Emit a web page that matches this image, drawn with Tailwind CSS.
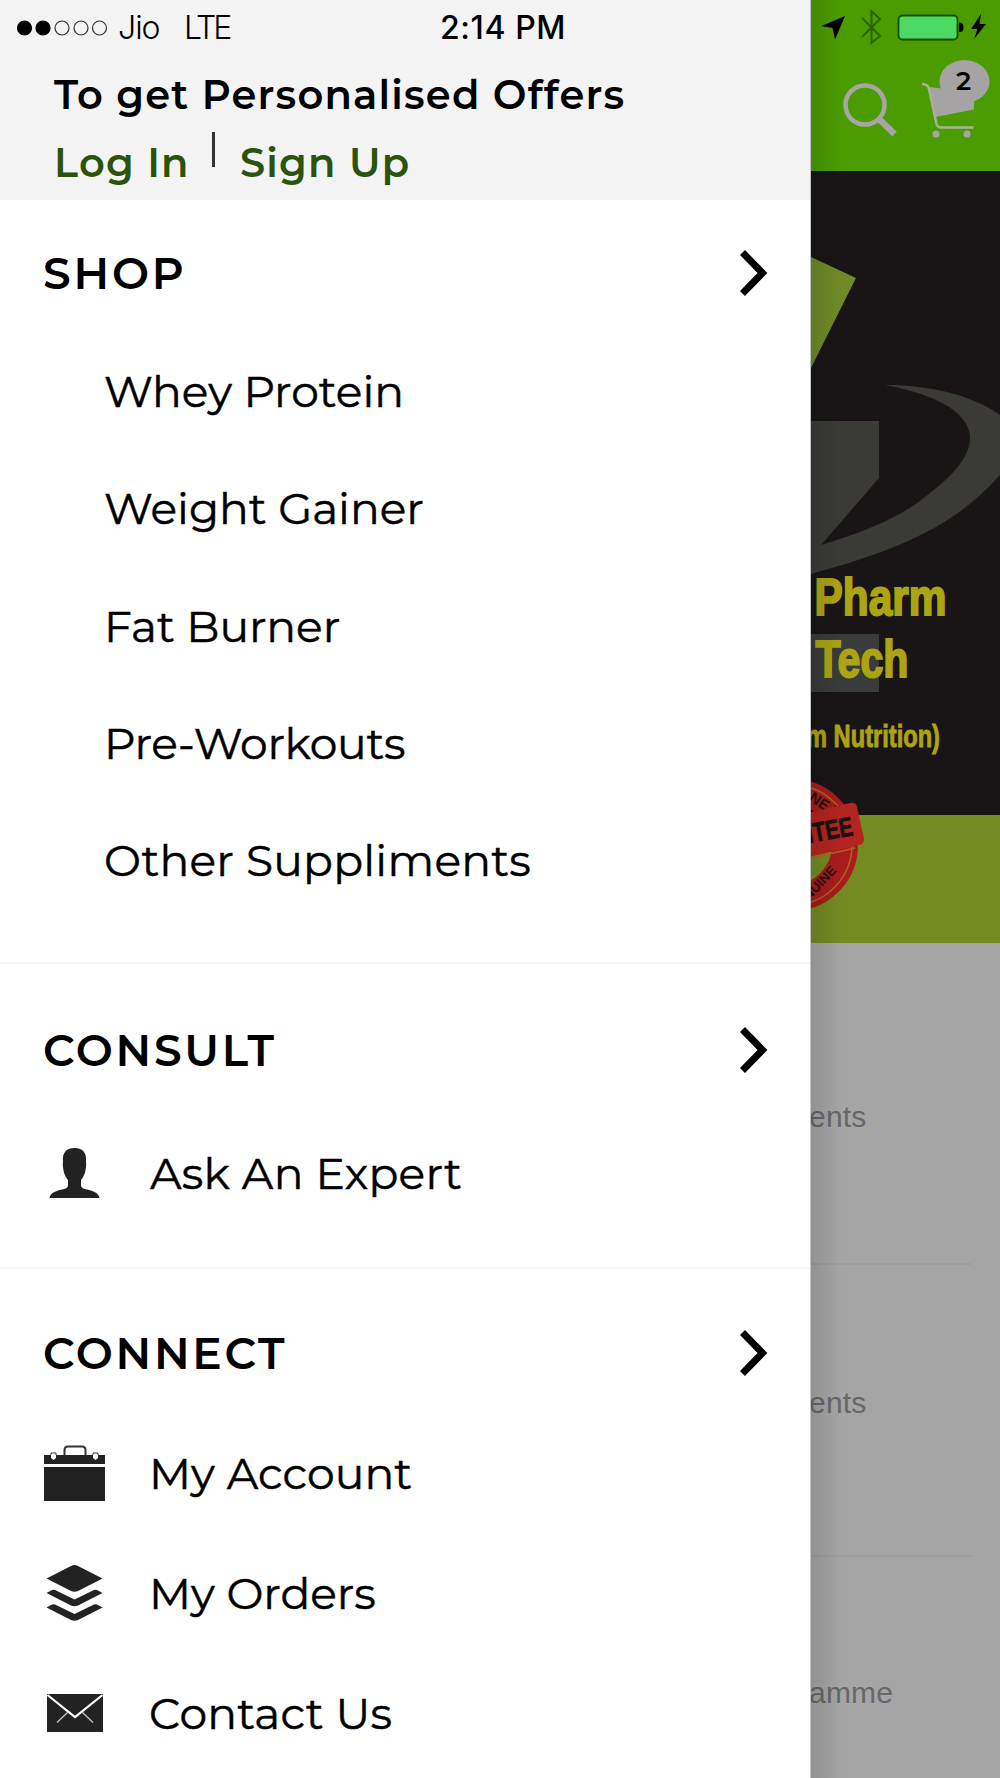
<!DOCTYPE html>
<html lang="en">

<head>
    <meta charset="UTF-8" />
    <title>Menu</title>
    <script src="https://cdn.jsdelivr.net/npm/@tailwindcss/browser@4"></script>
</head>

<body class="w-[1000px] h-[1778px] overflow-hidden flex bg-[#a5a5a5] font-[Montserrat,Inter,sans-serif] text-black">
    <!-- Drawer -->
    <aside class="w-[811px] h-full shrink-0 bg-white border-r border-[#c4c4c4] flex flex-col">
        <header class="h-[200px] shrink-0 bg-[#f3f3f3]">
            <div class="h-[55px] pt-px pl-4 flex items-center font-[Inter,sans-serif] text-[32px] leading-none">
                <svg class="w-[92px] h-4" viewBox="0 0 92 16" fill="none" stroke="#333" stroke-width="1.2">
                    <circle cx="8.5" cy="8" r="7" fill="#000" stroke="#000" />
                    <circle cx="27" cy="8" r="7" fill="#000" stroke="#000" />
                    <circle cx="46" cy="8" r="7" />
                    <circle cx="65" cy="8" r="7" />
                    <circle cx="83.5" cy="8" r="7" />
                </svg>
                <span class="w-[66px] pl-2.5 font-light tracking-[-1px]">Jio</span>
                <span class="w-[266px] pl-2.5 font-light tracking-[-3px]">LTE</span>
                <span class="font-medium tracking-[0.6px]">2:14 PM</span>
            </div>
            <p class="pl-[54px] h-20 leading-[80px] font-semibold text-[40px] tracking-[1.2px] whitespace-nowrap">To get Personalised Offers</p>
            <div class="pl-[54px] flex items-center h-[56px] text-[40px] leading-[56px] font-semibold tracking-[1.2px] text-[#2b530c]">
                <a class="w-[158px]">Log In</a>
                <span class="w-[3px] h-[35px] -mt-[28px] mr-[25px] bg-[#333]"></span>
                <a>Sign Up</a>
            </div>
        </header>

        <section class="h-[764px] shrink-0 pt-[13px] border-b-2 border-[#f5f5f5]">
            <div class="h-[120px] pl-[43px] pr-[42px] flex items-center justify-between">
                <h2 class="text-[44px] font-semibold tracking-[2.8px]">SHOP</h2>
                <svg class="w-7 h-[46px]" viewBox="0 0 28 46" fill="none" stroke="#000" stroke-width="7"><path d="M2.5 2.5 22.500 23 2.5 43.500" /></svg>
            </div>
            <ul class="pl-[104px] text-[44px] leading-[117.3px] [-webkit-text-stroke:0.5px_#000]">
                <li>Whey Protein</li>
                <li>Weight Gainer</li>
                <li>Fat Burner</li>
                <li class="tracking-[-0.2px]">Pre-Workouts</li>
                <li class="tracking-[0.25px]">Other Suppliments</li>
            </ul>
        </section>

        <section class="h-[305px] shrink-0 pt-[26px] border-b-2 border-[#f7f7f7]">
            <div class="h-[120px] pl-[43px] pr-[42px] flex items-center justify-between">
                <h2 class="text-[44px] font-semibold tracking-[2.7px]">CONSULT</h2>
                <svg class="w-7 h-[46px]" viewBox="0 0 28 46" fill="none" stroke="#000" stroke-width="7"><path d="M2.5 2.5 22.500 23 2.5 43.500" /></svg>
            </div>
            <div class="h-[126px] pl-[43px] flex items-center gap-[45px] text-[44px] tracking-[0.3px] [-webkit-text-stroke:0.5px_#000]">
                <svg class="w-[62px] h-[52px]" viewBox="0 0 62 52" fill="#222">
                    <path d="M6.500 51C7 45 16 43 21 42Q25 41 25 38V33C21 28 20.500 24 20 20Q19.500 17 20 15C19 5 24 1 31.500 1S44 5 43 15Q43.500 17 43 20C42.500 24 42 28 38 33V38Q38 41 42 42C47 43 56 45 56.500 51Z" />
                </svg>
                <span>Ask An Expert</span>
            </div>
        </section>

        <section class="pt-[24px]">
            <div class="h-[120px] pl-[43px] pr-[42px] flex items-center justify-between">
                <h2 class="text-[44px] font-semibold tracking-[2.7px]">CONNECT</h2>
                <svg class="w-7 h-[46px]" viewBox="0 0 28 46" fill="none" stroke="#000" stroke-width="7"><path d="M2.5 2.5 22.500 23 2.5 43.500" /></svg>
            </div>
            <div class="h-[120px] pl-[43px] flex items-center gap-[44px] text-[44px] tracking-[0.1px] [-webkit-text-stroke:0.5px_#000]">
                <svg class="w-[62px] h-[58px]" viewBox="0 0 62 58">
                    <path d="M1 11H62V20H1ZM1 23H62V57H1Z" fill="#222" />
                    <path d="M21.500 11V6Q21.500 2.500 25 2.500H39Q42.500 2.500 42.500 6V11" fill="none" stroke="#333" stroke-width="2" />
                    <path d="M8 11V9H13V11M50 11V9H55V11" fill="none" stroke="#333" />
                    <path d="M8 11H13V14L10.500 16 8 14ZM50 11H55V14L52.500 16 50 14Z" fill="#fff" />
                </svg>
                <span>My Account</span>
            </div>
            <div class="h-[120px] pl-[43px] flex items-center gap-[44px] text-[44px] [-webkit-text-stroke:0.5px_#000]">
                <svg class="w-[62px] h-[58px]" viewBox="0 0 62 58" fill="#222">
                    <path d="M31.500 1 Q33 1 35 2L59.500 14.500 35 27Q31.500 28.500 28 27L3.500 14.500 28 2Q30 1 31.500 1Z" />
                    <path d="M3.500 29 9 26Q10.500 25.500 12 26L31.500 35.500 51 26Q52.500 25.500 54 26L59.500 29 35 41.500Q31.500 43 28 41.500Z" />
                    <path d="M3.500 43.500 9 40.500Q10.500 40 12 40.500L31.500 50 51 40.500Q52.500 40 54 40.500L59.500 43.500 35 56Q31.500 57.500 28 56Z" />
                </svg>
                <span>My Orders</span>
            </div>
            <div class="h-[120px] pl-[43px] flex items-center gap-[44px] text-[44px] tracking-[0.2px] [-webkit-text-stroke:0.5px_#000]">
                <svg class="w-[62px] h-[38px]" viewBox="0 0 62 38">
                    <path d="M4 0H60V38H4Z" fill="#222" />
                    <path d="M4.500 1 32 23 59.500 1" fill="none" stroke="#fff" stroke-width="2.200" />
                    <path d="M25 18 14 28.500M39 18 50 28.500" stroke="#bbb" stroke-width="1.500" />
                </svg>
                <span>Contact Us</span>
            </div>
        </section>
    </aside>

    <!-- Dimmed page behind the drawer -->
    <main class="relative w-[189px] shrink-0 overflow-hidden">
        <div class="h-[171px] bg-[#4b9c00]">
            <svg class="w-[189px] h-[171px]" viewBox="811 0 189 171">
                <path d="M821.500 26 845 16 835 39.500 832.500 28Z" fill="#000" />
                <path d="M862 18 880 36 871.500 43V11L880 19 862 37" fill="none" stroke="#2a6300" stroke-width="2" />
                <rect x="898.500" y="15.500" width="59" height="24" rx="4" fill="#4cd964" stroke="#174d00" stroke-width="1.800" />
                <path d="M959 22.500H960Q963.500 23 963.500 27.500T960 32H959Z" fill="#000" />
                <path d="M981 14 971 29H977.500L974 39 986 24H979.500Z" fill="#000" />
                <circle cx="865" cy="105" r="19.500" fill="none" stroke="#a9a5a5" stroke-width="4.500" />
                <path d="M878 118 894.500 134" stroke="#a9a5a5" stroke-width="6.500" />
                <path d="M929 87 974 92V109.500L935.500 117Z" fill="#a5a3a3" />
                <path d="M922 84Q928 84 929 89L936 122Q937 127.500 941 127.500H973.500" fill="none" stroke="#a9b19b" stroke-width="2.500" />
                <circle cx="936" cy="134" r="3.500" fill="#a5a5a5" />
                <circle cx="967" cy="134" r="3.500" fill="#a5a5a5" />
                <ellipse cx="964.500" cy="81.500" rx="25" ry="21.500" fill="#a5a3a3" />
                <text x="963.500" y="89.500" text-anchor="middle" font-family="Montserrat, Inter, sans-serif" font-weight="600" font-size="26">2</text>
            </svg>
        </div>
        <svg class="w-[189px] h-[772px]" viewBox="811 171 189 772">
            <path d="M811 171H1000V815H811Z" fill="#191516" />
            <path d="M811 815H1000V943H811Z" fill="#748a23" />
            <path d="M811 257 856 278 811 368Z" fill="#6f8b27" />
            <path d="M811 421H879V478L821 545C865 532 900 517 925 497C950 478 971 458 970 436C968 410 930 393 885 385C930 385 972 395 1000 415V475C955 525 905 548 811 574Z" fill="#3a3b37" />
            <path d="M811 634H879V692H811Z" fill="#3a3b3b" />
            <g font-family="Liberation Sans, sans-serif" font-weight="700" fill="#aba413" stroke="#aba413">
                <text x="814.500" y="614.500" font-size="52" stroke-width="2" textLength="132" lengthAdjust="spacingAndGlyphs">Pharm</text>
                <text x="815.500" y="676.500" font-size="52" stroke-width="2" textLength="93" lengthAdjust="spacingAndGlyphs">Tech</text>
                <text x="806" y="747" font-size="31" stroke-width=".9" textLength="134" lengthAdjust="spacingAndGlyphs">m Nutrition)</text>
            </g>
            <!-- Guarantee stamp -->
            <circle cx="792" cy="845" r="53" fill="none" stroke="#a81c1c" stroke-width="26" />
            <circle cx="792" cy="845" r="60" fill="none" stroke="#b5601e" stroke-width="1.500" />
            <g font-family="Liberation Sans, sans-serif" font-weight="700" fill="#2a0d0d">
                <text transform="translate(808 800) rotate(33)" font-size="15">NE T</text>
                <path d="M800 815 850 803Q856 802 857 807L864 839Q864 844 859 845L800 859Z" fill="#b42420" />
                <path d="M811 858 855 848" stroke="#b5601e" stroke-width="1.500" />
                <text transform="translate(854 835) rotate(-10)" text-anchor="end" font-size="27" stroke="#1d1010" stroke-width=".8" textLength="55" lengthAdjust="spacingAndGlyphs" fill="#1d1010">NTEE</text>
                <text transform="translate(809 901) rotate(-47)" font-size="13" textLength="41" lengthAdjust="spacingAndGlyphs">NUINE</text>
            </g>
        </svg>
        <div class="font-['Liberation_Sans',sans-serif] text-[30px] leading-[40px] text-[#67676b] tracking-[0.2px]">
            <div class="h-[322px] w-40 pt-[154px] border-b-2 border-[#9d9d9d]"><span class="-ml-0.5">ents</span></div>
            <div class="h-[292px] w-40 pt-[118px] border-b-2 border-[#9d9d9d]"><span class="-ml-0.5">ents</span></div>
            <div class="w-40 pt-[116px]"><span class="-ml-0.5">amme</span></div>
        </div>
        <!-- Shadow cast by the drawer -->
        <div class="absolute inset-y-0 left-0 w-8 bg-linear-to-r from-black/12 to-transparent"></div>
    </main>
</body>

</html>
